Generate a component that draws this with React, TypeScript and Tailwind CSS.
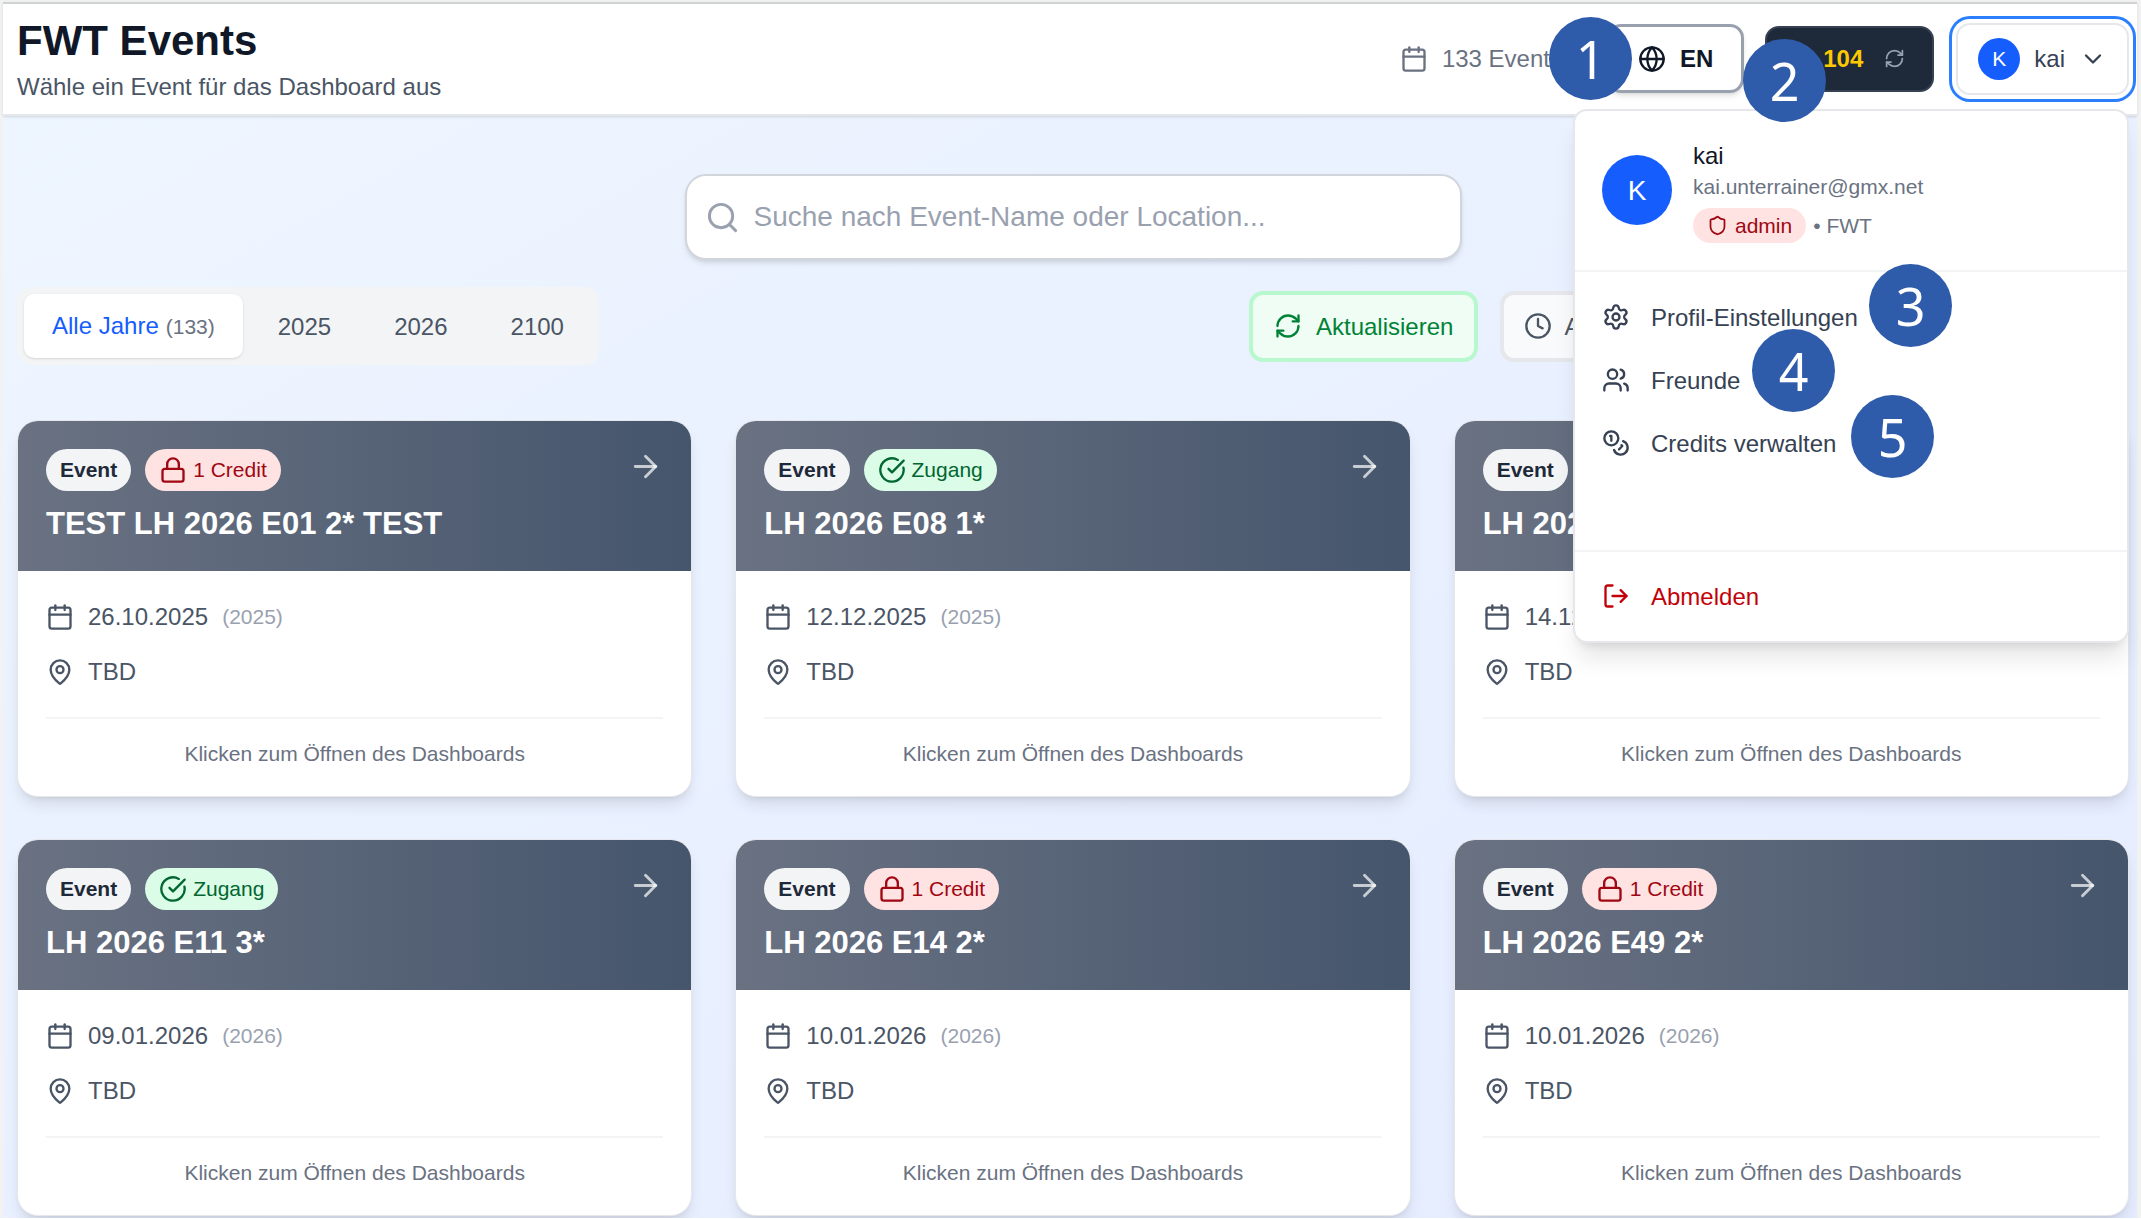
import React from "react";
import {
  ArrowRight,
  Calendar,
  ChevronDown,
  CircleCheckBig,
  Clock,
  Coins,
  Globe,
  Lock,
  LogOut,
  MapPin,
  RefreshCw,
  Search,
  Settings,
  Shield,
  Users,
} from "lucide-react";

type EventItem = { title: string; date: string; year: string; access: boolean };

const events: EventItem[] = [
  { title: "TEST LH 2026 E01 2* TEST", date: "26.10.2025", year: "2025", access: false },
  { title: "LH 2026 E08 1*", date: "12.12.2025", year: "2025", access: true },
  { title: "LH 2026 E10 2*", date: "14.12.2025", year: "2025", access: true },
  { title: "LH 2026 E11 3*", date: "09.01.2026", year: "2026", access: true },
  { title: "LH 2026 E14 2*", date: "10.01.2026", year: "2026", access: false },
  { title: "LH 2026 E49 2*", date: "10.01.2026", year: "2026", access: false },
];

const years = ["2025", "2026", "2100"];

const menuItems = [
  { label: "Profil-Einstellungen", Icon: Settings },
  { label: "Freunde", Icon: Users },
  { label: "Credits verwalten", Icon: Coins },
];

const steps = [
  { n: 1, place: "top-[15px] right-[505px]" },
  { n: 2, place: "top-[37px] right-[311px]" },
  { n: 3, place: "top-[262px] right-[185px]" },
  { n: 4, place: "top-[327px] right-[302px]" },
  { n: 5, place: "top-[393px] right-[203px]" },
];

function UserMenu() {
  return (
    <div className="absolute top-full right-0 z-20 mt-[14px] w-[556px] rounded-[14px] border-2 border-gray-200 bg-white shadow-xl">
      <div className="flex items-center gap-[21px] border-b-2 border-gray-100 px-[27px] py-[27px]">
        <div className="flex size-[70px] items-center justify-center rounded-full bg-[#155dfc] text-[28px] text-white">K</div>
        <div>
          <div className="text-[24px] leading-[35px] text-gray-900">kai</div>
          <div className="text-[21px] leading-[28px] text-gray-500">kai.unterrainer@gmx.net</div>
          <div className="mt-[7px] flex items-center gap-[7px] text-[21px] leading-[35px] text-gray-500">
            <span className="flex items-center gap-[7px] rounded-full bg-red-100 px-[14px] text-red-800">
              <Shield size={21} />
              admin
            </span>
            <span>• FWT</span>
          </div>
        </div>
      </div>
      <div className="h-[280px] border-b-2 border-gray-100 py-[14px]">
        {menuItems.map(({ label, Icon }) => (
          <button key={label} className="flex w-full items-center gap-[21px] px-[27px] py-[14px] text-[24px] leading-[35px] text-gray-700">
            <Icon size={28} />
            {label}
          </button>
        ))}
      </div>
      <div className="py-[13px]">
        <button className="flex w-full items-center gap-[21px] px-[27px] py-[14px] text-[24px] leading-[35px] text-red-700">
          <LogOut size={28} />
          Abmelden
        </button>
      </div>
    </div>
  );
}

function Header() {
  return (
    <header className="flex items-center justify-between border-t-2 border-b-2 border-t-[#d0d3d4] border-b-gray-200 bg-white pt-[9px] pr-[8px] pb-[10px] pl-[14px] shadow-sm">
      <div>
        <h1 className="text-[42px] leading-[56px] font-bold text-gray-900">FWT Events</h1>
        <p className="text-[24px] leading-[35px] text-gray-600">Wähle ein Event für das Dashboard aus</p>
      </div>
      <div className="flex items-center text-[24px] leading-[35px]">
        <div className="mr-[45px] flex items-center gap-[14px] text-gray-500">
          <Calendar size={28} />
          133 Events
        </div>
        <button className="mr-[21px] flex h-[69px] items-center gap-[14px] rounded-[14px] border-3 border-gray-400 bg-white px-[28px] font-bold text-gray-900 shadow-md">
          <Globe size={28} />
          EN
        </button>
        <button
          aria-label="Credits: 104"
          className="mr-[22px] flex h-[66px] w-[169px] items-center justify-end gap-[21px] rounded-[14px] border-2 border-gray-700 bg-gray-800 px-[27px] font-bold text-[#fcc800]"
        >
          104
          <RefreshCw size={21} className="text-gray-400" />
        </button>
        <div className="relative">
          <button className="flex h-[72px] items-center gap-[14px] rounded-[14px] border-2 border-gray-200 bg-white px-[20px] text-gray-700 ring-3 ring-[#2b7fff] ring-offset-4">
            <span className="flex size-[42px] items-center justify-center rounded-full bg-[#155dfc] text-[21px] text-white">K</span>
            kai
            <ChevronDown size={28} />
          </button>
          <UserMenu />
        </div>
      </div>
    </header>
  );
}

function Toolbar() {
  return (
    <div className="mt-[27px] flex items-center justify-between text-[24px] leading-[35px]">
      <div className="flex gap-[7px] rounded-[14px] bg-gray-100 p-[7px]">
        <button className="flex items-baseline gap-[7px] rounded-[10px] bg-white px-[28px] py-[14px] text-[#155dfc] shadow-sm">
          Alle Jahre
          <span className="text-[21px] text-gray-500">(133)</span>
        </button>
        {years.map((year) => (
          <button key={year} className="rounded-[10px] px-[28px] py-[14px] text-gray-600">
            {year}
          </button>
        ))}
      </div>
      <div className="flex w-[880px] gap-[22px]">
        <button className="flex items-center gap-[14px] rounded-[14px] border-4 border-green-200 bg-green-50 px-[21px] py-[14px] text-green-700">
          <RefreshCw size={28} />
          Aktualisieren
        </button>
        <button className="flex flex-1 items-center gap-[12px] rounded-[14px] border-4 border-gray-200 bg-gray-50 px-[20px] py-[14px] text-gray-600">
          <Clock size={28} />
          Alle
        </button>
      </div>
    </div>
  );
}

function EventCard({ event }: { event: EventItem }) {
  return (
    <article className="overflow-hidden rounded-[21px] border border-gray-200 bg-white shadow-lg">
      <div className="flex items-start justify-between bg-linear-to-r from-gray-500 to-slate-600 px-[28px] pt-[28px] pb-[23px]">
        <div>
          <div className="flex gap-[14px] text-[21px] leading-[42px]">
            <span className="rounded-full bg-gray-100 px-[14px] font-bold text-gray-800">Event</span>
            {event.access ? (
              <span className="flex items-center gap-[6px] rounded-full bg-green-100 px-[14px] text-green-800">
                <CircleCheckBig size={28} />
                Zugang
              </span>
            ) : (
              <span className="flex items-center gap-[6px] rounded-full bg-red-100 px-[14px] text-red-800">
                <Lock size={28} />1 Credit
              </span>
            )}
          </div>
          <h2 className="mt-[8px] text-[31px] leading-[49px] font-bold text-white">{event.title}</h2>
        </div>
        <ArrowRight size={35} className="text-white/70" />
      </div>
      <div className="p-[28px] text-[24px] leading-[35px] text-gray-600">
        <div className="flex items-center gap-[14px]">
          <Calendar size={28} />
          {event.date}
          <span className="text-[21px] text-gray-400">({event.year})</span>
        </div>
        <div className="mt-[20px] flex items-center gap-[14px]">
          <MapPin size={28} />
          TBD
        </div>
        <p className="mt-[28px] border-t-2 border-gray-100 pt-[21px] text-center text-[21px] leading-[28px] text-gray-500">
          Klicken zum Öffnen des Dashboards
        </p>
      </div>
    </article>
  );
}

export default function App() {
  return (
    <div className="relative border-t-2 border-r-4 border-l-3 border-[#f2f2f2] font-['Liberation_Sans',Arial,sans-serif]">
      <div className="bg-linear-to-br from-[#eef6ff] via-[#e9f0ff] to-[#e5ecff]">
        <Header />
        <main className="pt-[58px] pr-[8px] pb-[2px] pl-[14px]">
          <label className="mx-auto flex h-[86px] w-full max-w-[777px] items-center gap-[14px] rounded-[21px] border-2 border-gray-300 bg-white px-[18px] shadow-md">
            <Search size={35} className="shrink-0 text-gray-400" />
            <input
              type="text"
              aria-label="Suche"
              placeholder="Suche nach Event-Name oder Location..."
              className="w-full bg-transparent text-[28px] leading-[42px] text-gray-900 outline-none placeholder:text-gray-400"
            />
          </label>
          <Toolbar />
          <div className="mt-[55px] grid grid-cols-3 gap-x-[43px] gap-y-[42px]">
            {events.map((event) => (
              <EventCard key={event.title} event={event} />
            ))}
          </div>
        </main>
      </div>
      {steps.map(({ n, place }) => (
        <span
          key={n}
          className={`absolute z-30 flex size-[83px] items-center justify-center rounded-full bg-[#2f5bab] font-['Noto_Sans',sans-serif] text-[52px] leading-none text-white ${place}`}
        >
          {n}
        </span>
      ))}
    </div>
  );
}
